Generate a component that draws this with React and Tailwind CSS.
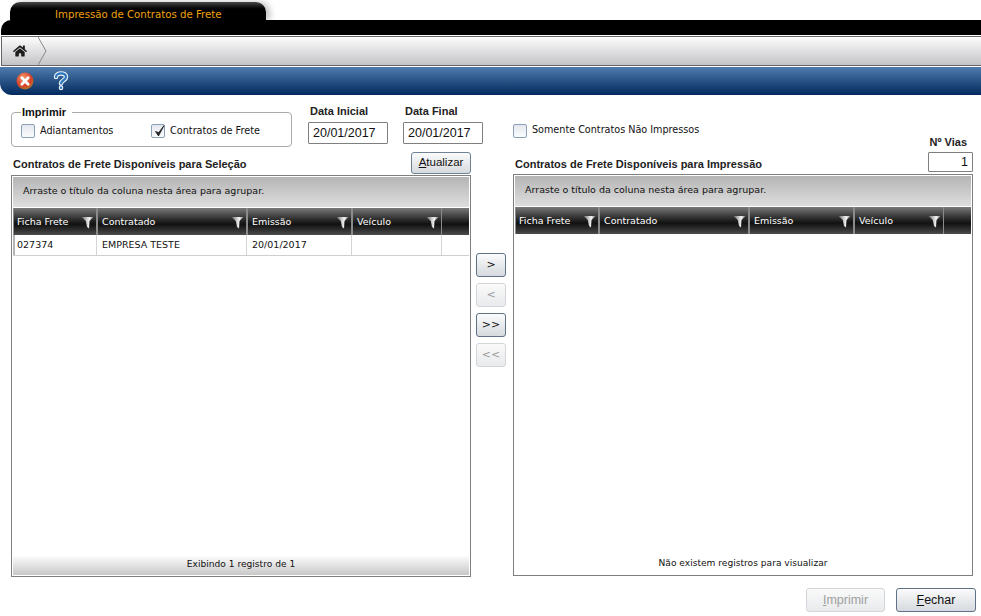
import React from "react";
import { FaHome } from "react-icons/fa";

const verdana = "font-['DejaVu_Sans',sans-serif]";
const arial = "font-['Liberation_Sans',sans-serif]";

const leftCols = [
  { label: "Ficha Frete", w: "w-[84px]" },
  { label: "Contratado", w: "w-[150px]" },
  { label: "Emissão", w: "w-[105px]" },
  { label: "Veículo", w: "w-[90px]" },
];

function Funnel() {
  return (
    <svg width="13" height="13" viewBox="0 0 13 13" className="shrink-0">
      <defs>
        <linearGradient id="fn" x1="0" x2="1" y1="0" y2="0">
          <stop offset="0" stopColor="#5f5f5f" />
          <stop offset="0.4" stopColor="#c4c4c4" />
          <stop offset="0.65" stopColor="#f4f4f4" />
          <stop offset="1" stopColor="#7c7c7c" />
        </linearGradient>
      </defs>
      <path d="M0.5 1 H12.5 L8.5 5 L8 12.5 L6 11 L4.8 5 Z" fill="url(#fn)" />
    </svg>
  );
}

function Checkbox({ checked }) {
  return (
    <span className="relative w-[14px] h-[14px] shrink-0 rounded-[2px] border border-[#8aa0b8] bg-gradient-to-b from-[#e4e8ee] to-[#fafbfc]">
      {checked && (
        <svg width="16" height="16" viewBox="0 0 16 16" className="absolute left-[0px] top-[-2px]">
          <path d="M3.5 8.5 L6.5 13 L12 2.5 L6.8 9.6 Z" fill="#222" stroke="#222" strokeWidth="0.8" />
        </svg>
      )}
    </span>
  );
}

function Grid({ rows, footer, gradientFooter }) {
  return (
    <div className="h-[402px] w-[460px] border border-[#7f7f7f] flex flex-col bg-white p-px">
      <div className={`h-[31px] shrink-0 bg-gradient-to-b from-[#b5b5b5] to-[#dedede] border-b border-white flex items-center pb-[1px] pl-[10px] text-[9.5px] text-[#111] ${verdana}`}>
        Arraste o título da coluna nesta área para agrupar.
      </div>
      <div className="h-[27px] shrink-0 flex bg-gradient-to-b from-[#7a7a7a] via-[#111] via-60% to-[#4c4c4c]">
        {leftCols.map((c, i) => (
          <div key={c.label} className={`${c.w} border-x border-[#8b8b8b] flex items-center justify-between pt-[1px] ${i === 0 ? "pl-[3px]" : "pl-[4px]"} pr-[2px] text-[9.5px] text-white ${verdana}`}>
            <span>{c.label}</span>
            <Funnel />
          </div>
        ))}
        <div className="flex-1" />
      </div>
      <div className="flex-1 flex flex-col min-h-0">
        {rows.map((r) => (
          <div key={r[0]} className={`h-[21px] flex border-b border-[#cfcfcf] text-[9.5px] text-[#111] ${verdana}`}>
            {r.map((cell, i) => (
              <div key={i} className={`${leftCols[i].w} border-r border-[#d4d4d4] flex items-center pt-[1px] ${i === 0 ? "border-l-2 border-l-[#b5b5b5] pl-[2px]" : "pl-[5px]"}`}>
                {cell}
              </div>
            ))}
            <div className="flex-1" />
          </div>
        ))}
      </div>
      <div className={`h-[19px] shrink-0 flex items-center justify-center pb-[2px] text-[9.1px] text-[#111] ${verdana} ${gradientFooter ? "bg-gradient-to-b from-[#fcfcfc] to-[#c8c8c8]" : ""}`}>
        {footer}
      </div>
    </div>
  );
}

function MoveButton({ label, disabled }) {
  return (
    <button className={`w-[30px] h-[24px] rounded-[3px] border flex items-center justify-center text-[11px] ${verdana} ${disabled ? "border-[#d2d6da] text-[#9a9a9a] bg-gradient-to-b from-[#fafafa] to-[#e8eaec]" : "border-[#5f7286] text-[#111] bg-gradient-to-b from-[#fbfbfc] to-[#d6dade]"}`}>
      {label}
    </button>
  );
}

export default function App() {
  return (
    <div className={`w-[981px] h-[616px] bg-white overflow-hidden flex flex-col ${arial}`}>
      {/* aba */}
      <div className="h-[20px] pt-[2px] pl-[10px] shrink-0">
        <div className={`w-[256px] h-[18px] rounded-t-[10px] bg-gradient-to-b from-[#4a4a4a] via-[#000] to-[#000] shadow-[4px_0_6px_rgba(0,0,0,0.25)] pl-[45px] pt-[6px] text-[10.2px] leading-[14px] text-[#f0a010] ${verdana}`}>
          Impressão de Contratos de Frete
        </div>
      </div>
      <div className="h-[15px] shrink-0 bg-black rounded-tl-[10px] ml-px" />
      {/* breadcrumb */}
      <div className="h-[30px] mt-[1px] shrink-0 border-y border-l border-[#666] ml-px flex bg-gradient-to-b from-[#fdfdfd] to-[#c4c4c8]">
        <div className="relative w-[36px] flex items-center justify-center">
          <FaHome className="text-[#1c1c1c] text-[14px]" />
          <svg width="9" height="28" viewBox="0 0 9 28" className="absolute left-[36px] top-0">
            <path d="M0 0 L8 14 L0 28" fill="none" stroke="#888" strokeWidth="1" />
          </svg>
        </div>
      </div>
      {/* barra de ferramentas */}
      <div className="h-[28px] mt-[1px] shrink-0 rounded-bl-[12px] bg-gradient-to-b from-[#4f7cae] to-[#032a5e] flex items-center pl-[16px] gap-[19px]">
        <svg width="18" height="18" viewBox="0 0 17 17">
          <defs>
            <radialGradient id="rb" cx="0.4" cy="0.3" r="0.8">
              <stop offset="0" stopColor="#f49a6c" />
              <stop offset="0.6" stopColor="#d8402a" />
              <stop offset="1" stopColor="#a8861c" />
            </radialGradient>
          </defs>
          <circle cx="8.5" cy="8.5" r="8" fill="url(#rb)" />
          <path d="M5.5 5.5 L11.5 11.5 M11.5 5.5 L5.5 11.5" stroke="#fff" strokeWidth="2.6" strokeLinecap="round" />
        </svg>
        <svg width="16" height="20" viewBox="0 0 16 20">
          <path d="M3 6 C3 1.5 13 1 13 6 C13 9 8.5 9 8 12.5 M8 16.5 V17" fill="none" stroke="#e8f2fb" strokeWidth="4.5" strokeLinecap="round" />
          <path d="M3 6 C3 1.5 13 1 13 6 C13 9 8.5 9 8 12.5 M8 16.5 V17" fill="none" stroke="#2c75bd" strokeWidth="2.2" strokeLinecap="round" />
        </svg>
      </div>

      {/* filtros */}
      <div className="h-[57px] shrink-0 flex pl-[11px] relative">
        <fieldset className="w-[281px] h-[41px] mt-[11px] border border-[#aaa] rounded-[4px] pl-[9px] flex">
          <legend className="pl-[1px] pr-[6px] text-[11px] leading-[12px] font-bold text-[#111]">Imprimir</legend>
          <div className={`flex items-center gap-[5px] h-[26px] text-[9.7px] text-[#111] ${verdana}`}>
            <Checkbox />
            <span className="w-[106px]">Adiantamentos</span>
            <Checkbox checked />
            <span>Contratos de Frete</span>
          </div>
        </fieldset>
        <div className="ml-[16px] mt-[9px] w-[80px]">
          <div className="text-[11px] leading-[14px] font-bold text-[#222] pl-[2px]">Data Inicial</div>
          <div className="mt-[4px] h-[22px] border border-[#7f7f7f] rounded-[1px] pl-[4px] flex items-center text-[12.5px] text-[#111]">20/01/2017</div>
        </div>
        <div className="ml-[15px] mt-[9px] w-[80px]">
          <div className="text-[11px] leading-[14px] font-bold text-[#222] pl-[2px]">Data Final</div>
          <div className="mt-[4px] h-[22px] border border-[#7f7f7f] rounded-[1px] pl-[4px] flex items-center text-[12.5px] text-[#111]">20/01/2017</div>
        </div>
        <div className={`ml-[30px] mt-[28px] h-[15px] flex items-center gap-[5px] text-[9.65px] text-[#111] ${verdana}`}>
          <Checkbox />
          <span>Somente Contratos Não Impressos</span>
        </div>
        <div className="absolute right-[14px] bottom-[3px] text-[11px] leading-[14px] font-bold text-[#222]">Nº Vias</div>
      </div>

      {/* titulos */}
      <div className="h-[22px] shrink-0 flex pl-[11px]">
        <div className="w-[460px] flex items-start justify-between">
          <div className="pl-[2px] pt-[5px] text-[11px] leading-[14px] font-bold text-[#222]">Contratos de Frete Disponíveis para Seleção</div>
          <button className="w-[60px] h-[22px] rounded-[3px] border border-[#6f8296] bg-gradient-to-b from-[#fbfbfc] to-[#d6dade] text-[11.5px] text-[#111]">
            <span className="underline">A</span>tualizar
          </button>
        </div>
        <div className="ml-[42px] w-[460px] flex items-start justify-between">
          <div className="pl-[2px] pt-[5px] text-[11px] leading-[14px] font-bold text-[#222]">Contratos de Frete Disponíveis para Impressão</div>
          <div className="w-[45px] h-[20px] border border-[#7f7f7f] rounded-[1px] flex items-center justify-end pr-[4px] text-[12.5px] text-[#111]">1</div>
        </div>
      </div>

      {/* grades */}
      <div className="flex pl-[11px]">
        <div className="mt-[1px]">
          <Grid rows={[["027374", "EMPRESA TESTE", "20/01/2017", ""]]} footer="Exibindo 1 registro de 1" gradientFooter />
        </div>
        <div className="w-[42px] pl-[5px] pt-[79px] flex flex-col gap-[6px]">
          <MoveButton label=">" />
          <MoveButton label="<" disabled />
          <MoveButton label=">>" />
          <MoveButton label="<<" disabled />
        </div>
        <Grid rows={[]} footer="Não existem registros para visualizar" />
      </div>

      {/* rodape */}
      <div className="flex justify-end gap-[11px] pr-[5px] pt-[11px]">
        <button className="w-[79px] h-[24px] rounded-[3px] border border-[#d2d6da] bg-gradient-to-b from-[#fafafa] to-[#e8eaec] text-[12.5px] text-[#a0a0a0]">
          <span className="underline">I</span>mprimir
        </button>
        <button className="w-[80px] h-[24px] rounded-[3px] border border-[#5f7286] bg-gradient-to-b from-[#fbfbfc] to-[#d6dade] text-[12.5px] text-[#111]">
          <span className="underline">F</span>echar
        </button>
      </div>
    </div>
  );
}
